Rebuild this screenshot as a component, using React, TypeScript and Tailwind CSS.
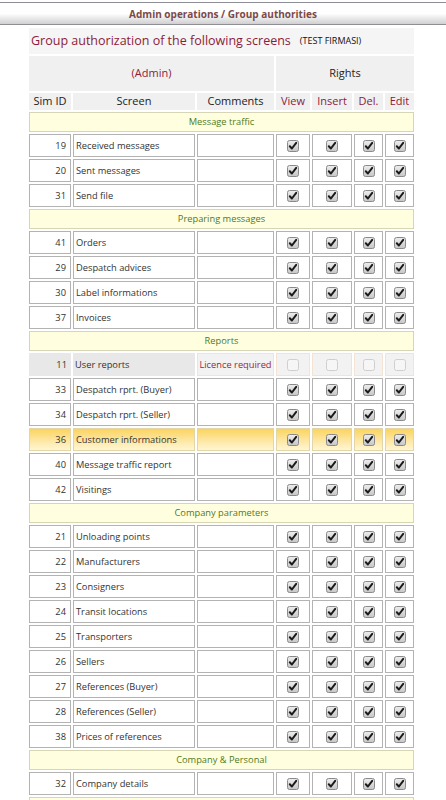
import React from "react";

type Row = { id: number; name: string; kind?: "disabled" | "hl" };
type Section = { title: string; rows: Row[] };

const data: Section[] = [
  {
    title: "Message traffic",
    rows: [
      { id: 19, name: "Received messages" },
      { id: 20, name: "Sent messages" },
      { id: 31, name: "Send file" },
    ],
  },
  {
    title: "Preparing messages",
    rows: [
      { id: 41, name: "Orders" },
      { id: 29, name: "Despatch advices" },
      { id: 30, name: "Label informations" },
      { id: 37, name: "Invoices" },
    ],
  },
  {
    title: "Reports",
    rows: [
      { id: 11, name: "User reports", kind: "disabled" },
      { id: 33, name: "Despatch rprt. (Buyer)" },
      { id: 34, name: "Despatch rprt. (Seller)" },
      { id: 36, name: "Customer informations", kind: "hl" },
      { id: 40, name: "Message traffic report" },
      { id: 42, name: "Visitings" },
    ],
  },
  {
    title: "Company parameters",
    rows: [
      { id: 21, name: "Unloading points" },
      { id: 22, name: "Manufacturers" },
      { id: 23, name: "Consigners" },
      { id: 24, name: "Transit locations" },
      { id: 25, name: "Transporters" },
      { id: 26, name: "Sellers" },
      { id: 27, name: "References (Buyer)" },
      { id: 28, name: "References (Seller)" },
      { id: 38, name: "Prices of references" },
    ],
  },
  {
    title: "Company & Personal",
    rows: [{ id: 32, name: "Company details" }],
  },
  {
    title: "",
    rows: [],
  },
];

function Check({ disabled }: { disabled?: boolean }) {
  if (disabled) {
    return (
      <svg width="12" height="12" viewBox="0 0 12 12">
        <rect x="0.5" y="0.5" width="11" height="11" rx="2" fill="#f6f6f6" stroke="#cfcfcf" />
      </svg>
    );
  }
  return (
    <svg width="12" height="12" viewBox="0 0 12 12">
      <defs>
        <linearGradient id="cbg" x1="0" y1="0" x2="0" y2="1">
          <stop offset="0" stopColor="#eeeeee" />
          <stop offset="1" stopColor="#c6c6c6" />
        </linearGradient>
      </defs>
      <rect x="0.5" y="0.5" width="11" height="11" rx="2" fill="url(#cbg)" stroke="#8a8a8a" />
      <path d="M2.8 6.3 L4.9 8.5 L9.2 2.8" fill="none" stroke="#1a1a1a" strokeWidth="2" strokeLinecap="round" strokeLinejoin="round" />
    </svg>
  );
}

function DataRow({ r }: { r: Row }) {
  if (r.kind === "disabled") {
    return (
      <>
        <div className="h-[23px] bg-[#e8e8e8] flex items-center justify-end pr-[4px] text-[#333]">{r.id}</div>
        <div className="h-[23px] bg-[#e8e8e8] flex items-center pl-[2px] text-[#333]">{r.name}</div>
        <div className="h-[23px] bg-[#f2f2f2] border border-[#f4e2d2] flex items-center justify-center text-[#9b2442]">Licence required</div>
        {[0, 1, 2, 3].map((i) => (
          <div key={i} className="h-[23px] bg-[#f2f2f2] border border-[#f4e2d2] flex items-center justify-center">
            <Check disabled />
          </div>
        ))}
      </>
    );
  }
  const cell =
    r.kind === "hl"
      ? "h-[23px] border border-[#e2d6a8] bg-gradient-to-b from-[#fbd35c] to-[#fff6d2]"
      : "h-[23px] border border-[#b3b3b3] bg-white";
  return (
    <>
      <div className={`${cell} flex items-center justify-end pr-[4px] text-[#333]`}>{r.id}</div>
      <div className={`${cell} flex items-center pl-[2px] text-[#333]`}>{r.name}</div>
      <div className={cell}></div>
      {[0, 1, 2, 3].map((i) => (
        <div key={i} className={`${cell} flex items-center justify-center`}>
          <Check />
        </div>
      ))}
    </>
  );
}

export default function App() {
  return (
    <div className="w-[446px] h-[800px] overflow-hidden bg-white font-['Open_Sans','Noto_Sans',sans-serif] text-[9.3px]">
      <div className="mt-[2px] h-[23px] border-t border-b border-[#8e8e96] bg-gradient-to-b from-white via-white to-[#d0d0d0] flex items-center justify-center pt-[1px] text-[10px] font-bold text-[#7b4a4a]">
        Admin operations / Group authorities
      </div>
      <div className="ml-[29px] mt-[3px] w-[385px] grid grid-cols-[42px_122px_77px_34px_40px_29px_29px] gap-[2px]">
        <div className="col-span-7 h-[26px] bg-[#f5f5f5] flex items-center pl-[2px]">
          <span className="text-[12.5px] text-[#8a1c3c]">Group authorization of the following screens</span>
          <span className="ml-[9px] text-[9px] text-[#111]">(TEST FIRMASI)</span>
        </div>
        <div className="col-span-3 h-[35px] bg-[#f0f0f0] flex items-center justify-center text-[11px] text-[#8a1c3c]">(Admin)</div>
        <div className="col-span-4 h-[35px] bg-[#f0f0f0] flex items-center justify-center text-[11px] text-[#222]">Rights</div>
        <div className="h-[17px] bg-[#f0f0f0] flex items-center justify-center text-[11px] text-[#222]">Sim ID</div>
        <div className="h-[17px] bg-[#f0f0f0] flex items-center justify-center text-[11px] text-[#222]">Screen</div>
        <div className="h-[17px] bg-[#f0f0f0] flex items-center justify-center text-[11px] text-[#222]">Comments</div>
        <div className="h-[17px] bg-[#f0f0f0] flex items-center justify-center text-[11px] text-[#8a1c3c]">View</div>
        <div className="h-[17px] bg-[#f0f0f0] flex items-center justify-center text-[11px] text-[#8a1c3c]">Insert</div>
        <div className="h-[17px] bg-[#f0f0f0] flex items-center justify-center text-[11px] text-[#8a1c3c]">Del.</div>
        <div className="h-[17px] bg-[#f0f0f0] flex items-center justify-center text-[11px] text-[#8a1c3c]">Edit</div>
        {data.map((s, i) => (
          <React.Fragment key={i}>
            <div className="col-span-7 h-[20px] bg-[#ffffe0] border border-[#d6d6b4] flex items-center justify-center text-[#4f7a1c]">
              {s.title}
            </div>
            {s.rows.map((r) => (
              <DataRow key={r.id} r={r} />
            ))}
          </React.Fragment>
        ))}
      </div>
    </div>
  );
}
